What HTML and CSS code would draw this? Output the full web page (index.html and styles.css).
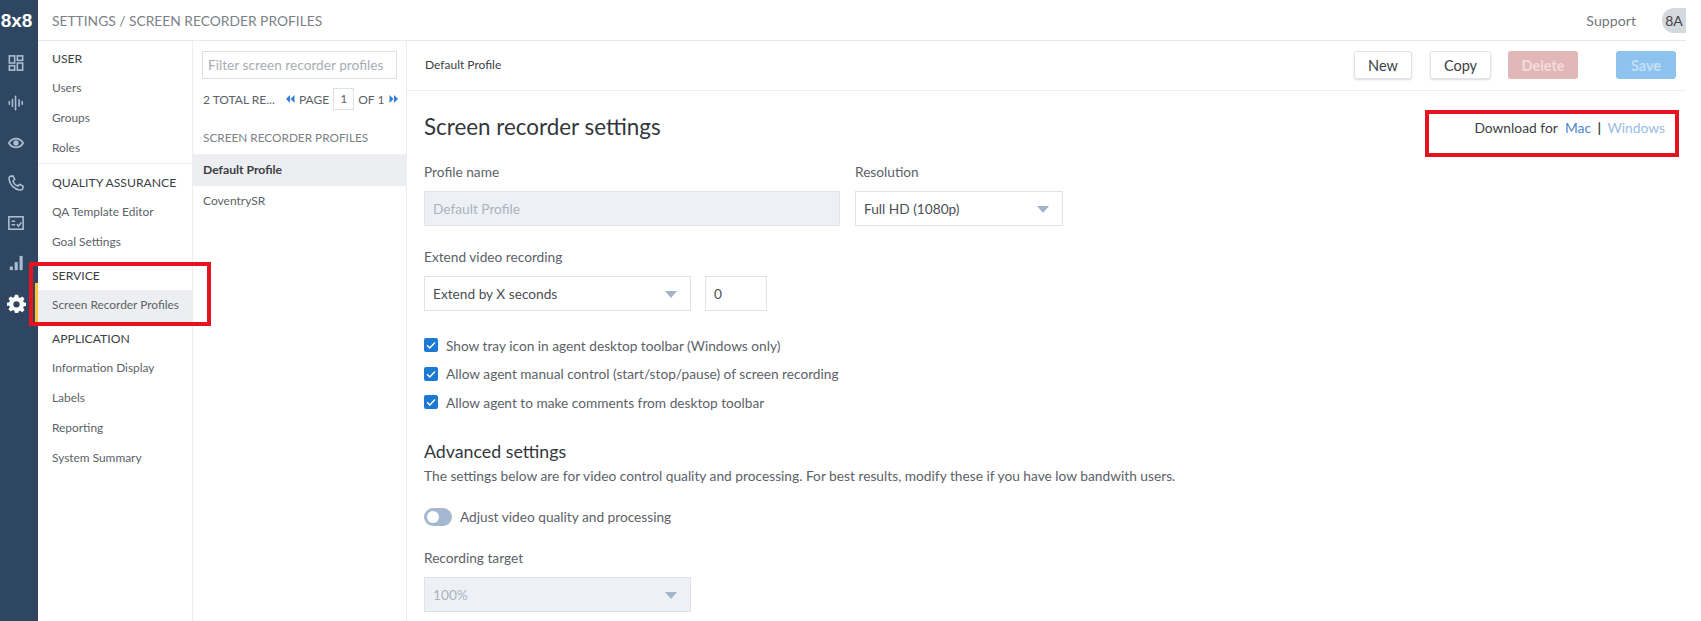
FILE: index.html
```html
<!DOCTYPE html>
<html lang="en">
<head>
<meta charset="utf-8">
<title>Screen recorder profiles</title>
<link rel="stylesheet" href="styles.css">
</head>
<body>
<div class="app">
  <aside class="rail">
    <div class="logo">8x8</div>
    <svg class="rail-icon" viewBox="0 0 18 18"><g fill="none" stroke="currentColor" stroke-width="1.8"><rect x="1.500" y="1" width="6" height="8"/><rect x="10.500" y="1" width="6" height="5"/><rect x="1.500" y="12" width="6" height="5"/><rect x="10.500" y="9" width="6" height="8"/></g></svg>
    <svg class="rail-icon" viewBox="0 0 18 18"><g stroke="currentColor" stroke-width="1.800" stroke-linecap="round"><path d="M1.500 7.500v3M5 5v8M8.500 1.500v15M12.500 5.500v7M16 7.500v3"/></g></svg>
    <svg class="rail-icon" viewBox="0 0 18 18"><path d="M1 9c2-3.500 5-5 8-5s6 1.500 8 5c-2 3.500-5 5-8 5s-6-1.500-8-5z" fill="none" stroke="currentColor" stroke-width="2"/><circle cx="9" cy="9" r="3" fill="currentColor"/></svg>
    <svg class="rail-icon" viewBox="0 0 18 18"><path d="M2.500 1.500 5.500 1 7.500 5 5.500 7C6.500 9.500 8.500 11.500 11 12.500L13 10.500 17 12.500 16.500 15.500C16 16.500 14.500 17 13 16.800 7 16 2 11 1.200 5 1 3.500 1.500 2 2.500 1.500z" fill="none" stroke="currentColor" stroke-width="1.800" stroke-linejoin="round"/></svg>
    <svg class="rail-icon" viewBox="0 0 18 18"><g fill="none" stroke="currentColor" stroke-width="1.800"><rect x="1" y="2" width="16" height="14"/><path d="M4 7h4M4 11h4M10 10.500l2 2 3-4"/></g></svg>
    <svg class="rail-icon" viewBox="0 0 18 18"><g fill="currentColor"><rect x="2" y="13" width="3.500" height="4"/><rect x="7.500" y="8" width="3.500" height="9"/><rect x="13" y="1" width="3.500" height="16"/></g></svg>
    <svg class="rail-icon gear" viewBox="0 0 24 24"><path fill-rule="evenodd" d="M10 1h4l.7 3.100 1.900.8L19.300 3.200l2.800 2.800-1.700 2.700.8 1.900L24 11v4l-2.800.6-.8 1.900 1.700 2.700-2.800 2.800-2.700-1.700-1.900.8L14 24h-4l-.7-2.900-1.900-.8-2.700 1.700-2.800-2.800 1.700-2.700-.8-1.900L0 15v-4l2.800-.6.800-1.900L1.900 5.800 4.700 3l2.700 1.700 1.900-.8L10 1zm2 8a4 4 0 1 0 0 8 4 4 0 0 0 0-8z" fill="currentColor"/></svg>
  </aside>

  <div class="shell">
    <header class="topbar">
      <div class="crumbs">SETTINGS / SCREEN RECORDER PROFILES</div>
      <div class="top-right">
        <span class="support">Support</span>
        <span class="avatar">8A</span>
      </div>
    </header>

    <div class="body-row">
      <nav class="nav">
        <section class="nav-section">
          <h4>USER</h4>
          <a class="nav-item">Users</a>
          <a class="nav-item">Groups</a>
          <a class="nav-item">Roles</a>
        </section>
        <section class="nav-section ruled">
          <h4>QUALITY ASSURANCE</h4>
          <a class="nav-item">QA Template Editor</a>
          <a class="nav-item">Goal Settings</a>
        </section>
        <section class="nav-section">
          <h4>SERVICE</h4>
          <a class="nav-item active">Screen Recorder Profiles</a>
        </section>
        <section class="nav-section">
          <h4>APPLICATION</h4>
          <a class="nav-item">Information Display</a>
          <a class="nav-item">Labels</a>
          <a class="nav-item">Reporting</a>
          <a class="nav-item">System Summary</a>
        </section>
      </nav>

      <div class="list-col">
        <div class="filter">Filter screen recorder profiles</div>
        <div class="pager">
          <span class="total">2 TOTAL RE...</span>
          <svg class="arrow" viewBox="0 0 10 8"><path d="M5 0v8L1 4zM9.500 0v8l-4-4z" fill="currentColor"/></svg>
          <span>PAGE</span>
          <span class="page-box">1</span>
          <span>OF 1</span>
          <svg class="arrow next" viewBox="0 0 10 8"><path d="M.5 0v8l4-4zM5 0v8l4-4z" fill="currentColor"/></svg>
        </div>
        <div class="list-title">SCREEN RECORDER PROFILES</div>
        <div class="list-item selected">Default Profile</div>
        <div class="list-item">CoventrySR</div>
      </div>

      <main class="main">
        <div class="toolbar">
          <span class="crumb-name">Default Profile</span>
          <div class="actions">
            <button class="btn btn-new">New</button>
            <button class="btn btn-copy">Copy</button>
            <button class="btn btn-delete">Delete</button>
            <button class="btn btn-save">Save</button>
          </div>
        </div>

        <div class="form">
          <div class="title-row">
            <h1>Screen recorder settings</h1>
            <div class="download">Download for <a class="mac">Mac</a> <b>|</b> <a class="win">Windows</a></div>
          </div>

          <div class="field-row first">
            <div>
              <label class="lbl">Profile name</label>
              <div class="control disabled w-name">Default Profile</div>
            </div>
            <div>
              <label class="lbl">Resolution</label>
              <div class="control select w-res">Full HD (1080p)<i class="caret"></i></div>
            </div>
          </div>

          <label class="lbl gap">Extend video recording</label>
          <div class="field-row second">
            <div class="control select w-sel">Extend by X seconds<i class="caret"></i></div>
            <div class="control w-num">0</div>
          </div>

          <div class="checks">
            <div class="check"><svg class="box" viewBox="0 0 14 14"><rect width="14" height="14" rx="2" fill="#1c7ad2"/><path d="M3 7.300 5.800 10 11 4.500" fill="none" stroke="#fff" stroke-width="1.400"/></svg>Show tray icon in agent desktop toolbar (Windows only)</div>
            <div class="check"><svg class="box" viewBox="0 0 14 14"><rect width="14" height="14" rx="2" fill="#1c7ad2"/><path d="M3 7.300 5.800 10 11 4.500" fill="none" stroke="#fff" stroke-width="1.400"/></svg>Allow agent manual control (start/stop/pause) of screen recording</div>
            <div class="check"><svg class="box" viewBox="0 0 14 14"><rect width="14" height="14" rx="2" fill="#1c7ad2"/><path d="M3 7.300 5.800 10 11 4.500" fill="none" stroke="#fff" stroke-width="1.400"/></svg>Allow agent to make comments from desktop toolbar</div>
          </div>

          <h2>Advanced settings</h2>
          <p class="note">The settings below are for video control quality and processing. For best results, modify these if you have low bandwith users.</p>

          <div class="toggle-row"><span class="toggle"></span>Adjust video quality and processing</div>

          <label class="lbl gap">Recording target</label>
          <div class="control select disabled w-sel">100%<i class="caret"></i></div>
        </div>
      </main>
    </div>
  </div>
</div>
<div class="mark mark-nav"></div>
<div class="mark mark-dl"></div>
</body>
</html>
```

FILE: styles.css
```css
* { box-sizing: border-box; }
html, body { margin: 0; height: 100%; overflow: hidden; background: #fff; }
body { font-family: Lato, "Noto Sans", sans-serif; font-size: 13px; color: #4a4f55; }
.app { display: flex; width: 1686px; height: 621px; }

.rail { width: 38px; flex: none; background: #2e4662; color: #a9bdd3; display: flex; flex-direction: column; align-items: center; }
.logo { width: 38px; height: 41px; line-height: 41px; font-family: "Liberation Sans", sans-serif; font-weight: 700; font-size: 19px; color: #fff; text-align: center; padding-right: 5px; margin-bottom: 13px; white-space: nowrap; }
.rail-icon { width: 16px; height: 18px; margin: 0 6px 22px 0; flex: none; }
.rail-icon.gear { width: 19px; height: 19px; color: #fff; margin-right: 6px; }

.shell { flex: 1; display: flex; flex-direction: column; min-width: 0; }
.topbar { height: 41px; flex: none; border-bottom: 1px solid #e5e8ec; display: flex; justify-content: space-between; align-items: center; padding-left: 14px; }
.crumbs { font-size: 13.800px; color: #7b8187; }
.top-right { display: flex; align-items: center; }
.support { font-size: 14.200px; color: #73797f; margin-right: 26px; }
.avatar { width: 24px; height: 25px; border-radius: 12px 0 0 12px; background: #d5d9de; color: #444; font-size: 14px; display: flex; align-items: center; justify-content: center; }

.body-row { flex: 1; display: flex; min-height: 0; }
.nav { width: 155px; flex: none; border-right: 1px solid #eceef1; }
.nav-section { padding-top: 9px; }
.nav-section:first-child { padding-top: 8px; }
.nav-section.ruled { border-top: 1px solid #eceef1; }
.nav-section h4 { margin: 0 0 4px; padding-left: 14px; font-size: 12.200px; line-height: 20px; font-weight: 400; color: #3b3f44; white-space: nowrap; }
.nav-item { display: block; height: 30px; line-height: 30px; padding-left: 14px; font-size: 11.900px; color: #5c6268; white-space: nowrap; }
.nav-item.active { position: relative; height: 32px; margin-bottom: -2px; background: #eceef1; }
.nav-item.active::before { content: ""; position: absolute; left: -3px; top: -7px; width: 3px; bottom: 0; background: #f6c634; }

.list-col { width: 214px; flex: none; border-right: 1px solid #eceef1; padding-top: 10px; }
.filter { margin: 0 9px; height: 28px; line-height: 26px; padding-left: 5px; border: 1px solid #d9dfe6; font-size: 13.700px; color: #a7adb4; white-space: nowrap; overflow: hidden; }
.pager { display: flex; align-items: center; height: 22px; margin: 9px 0 0 10px; font-size: 12px; color: #5c6268; white-space: nowrap; }
.total { width: 82px; }
.arrow { color: #2f80d8; width: 10px; height: 8px; margin-right: 4px; flex: none; }
.arrow.next { margin: 0 0 0 5px; }
.page-box { width: 21px; height: 22px; line-height: 20px; text-align: center; border: 1px solid #dde2e8; margin: 0 4px; }
.list-title { margin: 18px 0 6px 10px; height: 20px; line-height: 20px; font-size: 11.800px; color: #7b8187; white-space: nowrap; }
.list-item { height: 30px; line-height: 30px; padding-left: 10px; font-size: 12px; color: #5c6268; }
.list-item.selected { height: 32px; line-height: 31px; background: #eceef1; color: #3b3f44; font-weight: 700; font-size: 12.200px; }

.main { flex: 1; min-width: 0; }
.toolbar { height: 50px; border-bottom: 1px solid #eceef1; display: flex; justify-content: space-between; padding: 10px 10px 0 18px; }
.crumb-name { font-size: 12px; color: #3b3f44; line-height: 27px; }
.actions { display: flex; }
.btn { height: 28px; font: inherit; font-size: 14.500px; border-radius: 3px; padding: 0; }
.btn-new { width: 58px; border: 1px solid #e1e5ea; background: #fff; color: #3b3f44; box-shadow: 0 1px 2px #d6dbe2; margin-right: 18px; }
.btn-copy { width: 61px; border: 1px solid #e1e5ea; background: #fff; color: #3b3f44; box-shadow: 0 1px 2px #d6dbe2; margin-right: 17px; }
.btn-delete { width: 70px; border: 0; background: #e2b7b8; color: #f2dcdc; font-weight: 700; margin-right: 38px; }
.btn-save { width: 60px; border: 0; background: #8fc3ef; color: #c4e0f7; font-weight: 700; }

.form { padding: 22px 21px 0 17px; }
.title-row { display: flex; justify-content: space-between; align-items: center; height: 28px; }
h1 { margin: 0; font-size: 22.400px; font-weight: 400; color: #33373c; line-height: 28px; }
.download { font-size: 13.800px; color: #3b3f44; }
.download b { font-weight: 700; margin: 0 3px; }
.mac { color: #4a86cf; margin-left: 4px; }
.win { color: #97bde6; }

.lbl { display: block; height: 20px; line-height: 20px; font-size: 13.700px; color: #5c6268; margin-bottom: 9px; }
.lbl.gap { margin-top: 21px; }
.field-row { display: flex; gap: 15px; }
.field-row.second { gap: 14px; }
.field-row.first { margin-top: 21px; }
.control { height: 35px; line-height: 33px; border: 1px solid #dfe3e8; padding-left: 8px; font-size: 13.700px; color: #4a4f55; position: relative; white-space: nowrap; }
.control.disabled { background: #edf1f6; color: #aab3bd; }
.w-name { width: 416px; }
.w-res { width: 208px; }
.w-sel { width: 267px; }
.w-num { width: 62px; }
.caret { position: absolute; right: 13px; top: 14px; width: 0; height: 0; border-left: 6px solid transparent; border-right: 6px solid transparent; border-top: 7px solid #a3b5c8; }

.checks { margin-top: 20px; }
.check { display: flex; align-items: center; height: 28.500px; font-size: 13.700px; color: #5c6268; white-space: nowrap; }
.box { width: 14px; height: 14px; margin-right: 8px; flex: none; }

h2 { margin: 22px 0 3px; font-size: 17.800px; line-height: 24px; font-weight: 400; color: #33373c; }
.note { margin: 0; font-size: 13.740px; line-height: 20px; color: #5c6268; white-space: nowrap; }
.toggle-row { display: flex; align-items: center; height: 20px; margin-top: 21px; font-size: 13.700px; color: #5c6268; }
.toggle { width: 28px; height: 18px; border-radius: 9px; background: #a4b8d2; margin-right: 8px; position: relative; flex: none; }
.toggle::before { content: ""; position: absolute; left: 3px; top: 3px; width: 12px; height: 12px; border-radius: 50%; background: #fff; }

.mark { position: absolute; border: 4px solid #e3141f; pointer-events: none; }
.mark-nav { left: 29px; top: 262px; width: 182px; height: 64px; }
.mark-dl { left: 1425px; top: 110px; width: 254px; height: 47px; }
```
